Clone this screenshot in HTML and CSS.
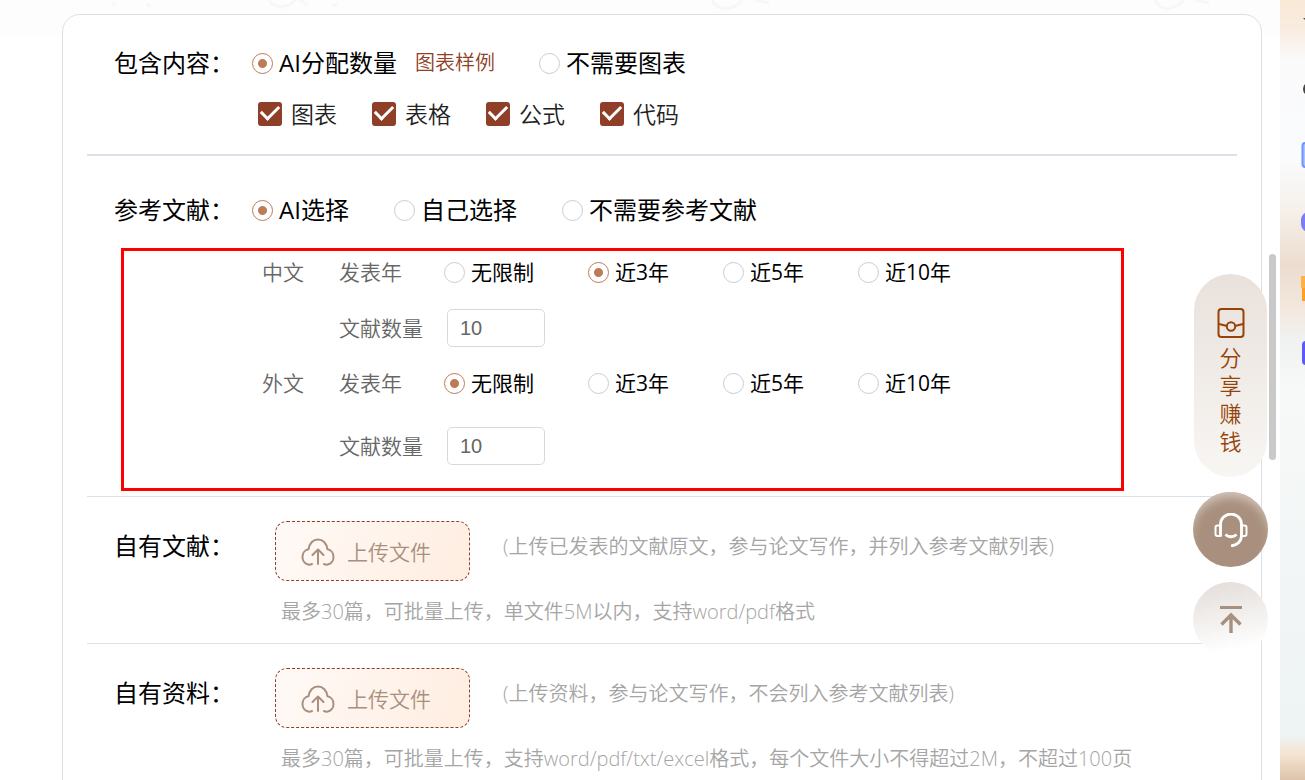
FILE: index.html
```html
<!DOCTYPE html>
<html lang="zh-CN">
<head>
<meta charset="utf-8">
<meta name="viewport" content="width=device-width, initial-scale=1">
<title>论文设置</title>
<link rel="stylesheet" href="styles.css">
</head>
<body>
<svg class="sprite" aria-hidden="true">
  <symbol id="cloud" viewBox="0 0 34 28">
    <g fill="none" stroke="currentColor" stroke-width="2" stroke-linecap="round" stroke-linejoin="round">
      <path d="M11 26c-1.200.6-2.500.8-3.700.5A7.500 7.500 0 0 1 1.500 19c0-4 2.600-7.200 6-7.700C8.200 5.600 12 1.500 17 1.500s8.800 4.100 9.500 9.800c3.400.5 6 3.700 6 7.700a7.500 7.500 0 0 1-5.800 7.500c-1.200.3-2.500.1-3.700-.5"/>
      <path d="M17 26V12M11.500 17L17 11.500L22.500 17"/>
    </g>
  </symbol>
</svg>
<main class="page">
  <svg class="watermark" viewBox="0 0 1280 14" aria-hidden="true">
    <path d="M112 4l4 1M147 3l3 4M269 0c4 9 20 9 27-1M300 0l8 5M332 5h6M712 0c6 12 24 10 30 0M755 0l14 3M1155 0c6 14 24 8 28 0M1195 0l14 3"/>
  </svg>
  <form class="card">
    <section class="section section-content">
      <div class="row">
        <span class="title">包含内容：</span>
        <label class="choice"><input class="radio" type="radio" name="content" checked>AI分配数量</label>
        <a class="sample" href="#">图表样例</a>
        <label class="choice"><input class="radio" type="radio" name="content">不需要图表</label>
      </div>
      <div class="checks">
        <label class="check"><input class="checkbox" type="checkbox" checked>图表</label>
        <label class="check"><input class="checkbox" type="checkbox" checked>表格</label>
        <label class="check"><input class="checkbox" type="checkbox" checked>公式</label>
        <label class="check"><input class="checkbox" type="checkbox" checked>代码</label>
      </div>
    </section>

    <section class="section section-refs">
      <div class="row refs-row">
        <span class="title">参考文献：</span>
        <label class="choice"><input class="radio" type="radio" name="refs" checked>AI选择</label>
        <label class="choice"><input class="radio" type="radio" name="refs">自己选择</label>
        <label class="choice"><input class="radio" type="radio" name="refs">不需要参考文献</label>
      </div>
      <div class="limits">
        <div class="limit-group">
          <span class="lang">中文</span>
          <span class="field">发表年</span>
          <div class="years">
            <label class="choice"><input class="radio" type="radio" name="cn">无限制</label>
            <label class="choice"><input class="radio" type="radio" name="cn" checked>近3年</label>
            <label class="choice"><input class="radio" type="radio" name="cn">近5年</label>
            <label class="choice"><input class="radio" type="radio" name="cn">近10年</label>
          </div>
          <label class="field count" for="cn-count">文献数量</label>
          <input class="number" id="cn-count" type="text" value="10">
        </div>
        <div class="limit-group limit-foreign">
          <span class="lang">外文</span>
          <span class="field">发表年</span>
          <div class="years">
            <label class="choice"><input class="radio" type="radio" name="en" checked>无限制</label>
            <label class="choice"><input class="radio" type="radio" name="en">近3年</label>
            <label class="choice"><input class="radio" type="radio" name="en">近5年</label>
            <label class="choice"><input class="radio" type="radio" name="en">近10年</label>
          </div>
          <label class="field count" for="en-count">文献数量</label>
          <input class="number" id="en-count" type="text" value="10">
        </div>
      </div>
    </section>

    <section class="section section-upload">
      <span class="title">自有文献：</span>
      <button class="upload" type="button"><svg class="cloud"><use href="#cloud"/></svg>上传文件</button>
      <span class="hint">(上传已发表的文献原文，参与论文写作，并列入参考文献列表)</span>
      <p class="note">最多30篇，可批量上传，单文件5M以内，支持word/pdf格式</p>
    </section>

    <section class="section section-upload">
      <span class="title">自有资料：</span>
      <button class="upload" type="button"><svg class="cloud"><use href="#cloud"/></svg>上传文件</button>
      <span class="hint">(上传资料，参与论文写作，不会列入参考文献列表)</span>
      <p class="note">最多30篇，可批量上传，支持word/pdf/txt/excel格式，每个文件大小不得超过2M，不超过100页</p>
    </section>
  </form>
  <div class="thumb"></div>
  <nav class="floating" aria-label="快捷操作">
    <button class="share" type="button">
      <svg class="share-icon" viewBox="0 0 28 30" fill="none" stroke="currentColor" stroke-width="2">
        <rect x="1.500" y="1" width="25" height="28" rx="3"/>
        <circle cx="14" cy="18.500" r="4.200"/>
        <path d="M2 16l8 2M26 16l-8 2"/>
      </svg>
      <span class="share-text">分享赚钱</span>
    </button>
    <button class="round service" type="button" aria-label="客服">
      <svg class="service-icon" viewBox="0 0 34 34" fill="none" stroke="currentColor" stroke-width="2.800">
        <path d="M6.500 23V11.500a10.500 10.500 0 0 1 21 0V22.500c0 6-4.500 10-10.500 10.300"/>
        <path d="M6.500 12.500H3.500a2 2 0 0 0-2 2v6.500a2 2 0 0 0 2 2h3zM27.500 12.500h3a2 2 0 0 1 2 2v6.500a2 2 0 0 1-2 2h-3z" stroke-width="2"/>
        <path d="M11.500 21.500c3 3 8 3 11 0"/>
      </svg>
    </button>
    <button class="round to-top" type="button" aria-label="返回顶部">
      <svg class="top-icon" viewBox="0 0 22 27" fill="none" stroke="currentColor">
        <path d="M0 1.500H22" stroke-width="3"/>
        <path d="M11 27V9M1.500 18.500L11 9l9.500 9.500" stroke-width="3.400"/>
      </svg>
    </button>
  </nav>
</main>
<aside class="strip">
  <svg class="strip-icons" viewBox="0 0 25 400" aria-hidden="true">
    <path d="M23 18h2v2z" fill="#555"/>
    <circle cx="30" cy="89" r="6" fill="none" stroke="#444" stroke-width="2"/>
    <rect x="22.500" y="143" width="20" height="24" rx="3" fill="#a9c6fb" stroke="#6b97f7" stroke-width="2"/>
    <rect x="21" y="212" width="20" height="20" rx="8" fill="#7f7cf5"/>
    <path d="M21 276h4v12h-4z" fill="#ffb23f"/><path d="M22 288h3v13h-3z" fill="#ff9e1f"/>
    <rect x="22" y="341" width="20" height="24" rx="4" fill="#5d59f3"/>
  </svg>
</aside>
</body>
</html>
```

FILE: styles.css
```css
* { box-sizing: border-box; }

body {
  margin: 0;
  height: 100vh;
  overflow: hidden;
  display: flex;
  background: #fff;
  color: #000;
  font-family: "Open Sans", "Noto Sans CJK SC", sans-serif;
  font-size: 24px;
  font-weight: 350;
  line-height: 32px;
}

button, input { font: inherit; }
.sprite { display: none; }

.page {
  position: relative;
  flex: 1;
  min-width: 0;
  padding: 0 18px 0 62px;
  background: linear-gradient(#fdfdfd 35px, #fff 35px);
}

.watermark {
  position: absolute;
  top: 0;
  left: 0;
  width: 100%;
  height: 14px;
  fill: none;
  stroke: #f7f7f7;
  stroke-width: 3;
}

.card {
  margin-top: 14px;
  padding: 0 24px 40px;
  border: 1px solid #dcdfe8;
  border-radius: 18px;
  background: #fff;
}

.section { border-bottom: 1px solid #dce0e9; }
.section:last-child { border-bottom: 0; }

.section-content {
  padding: 32px 0 24px 27px;
  border-bottom-width: 2px;
}

.row { display: flex; align-items: center; }
.title { width: 138px; flex: none; white-space: nowrap; font-weight: 400; }
.choice { display: flex; align-items: center; gap: 6px; white-space: nowrap; font-weight: 400; }

.radio, .checkbox { appearance: none; margin: 0; flex: none; }

.radio {
  width: 21px;
  height: 21px;
  border: 1px solid #ccc;
  border-radius: 50%;
  background: #fff;
}

.radio:checked {
  border-color: #bd7b57;
  background: radial-gradient(circle, #bd7b57 4px, #fff 5px);
}

.sample {
  margin: 0 44px 0 18px;
  color: #8f4027;
  font-size: 20px;
  text-decoration: none;
}

.checks {
  display: flex;
  gap: 35px;
  margin-top: 19px;
  padding-left: 144px;
  font-size: 23px;
  color: #222;
}

.check { display: flex; align-items: center; gap: 9px; }

.checkbox {
  display: grid;
  place-items: center;
  width: 24px;
  height: 24px;
  border-radius: 3px;
  background: #8f3e27;
}

.checkbox:checked::before {
  content: "";
  width: 15px;
  height: 8px;
  margin-bottom: 7px;
  border: solid #fff;
  border-width: 0 0 3px 3px;
  transform: rotate(-45deg);
}

.section-refs { padding: 38px 0 5px; }
.refs-row { gap: 45px; padding-left: 27px; }
.refs-row .title { margin-right: -45px; }

.limits {
  margin: 22px 113px 0 34px;
  padding: 5px 0 23px 138px;
  border: 3px solid #f00;
  font-size: 21px;
  color: #666;
}

.limit-group {
  display: grid;
  grid-template-columns: 77px 105px 1fr;
  align-items: center;
  row-gap: 21px;
}

.limit-foreign { margin-top: 20px; row-gap: 28px; }
.count { grid-column: 2; }

.years { display: flex; gap: 54px; color: #000; }

.number {
  width: 98px;
  height: 38px;
  margin-left: 3px;
  padding: 0 12px;
  border: 1px solid #d9d9d9;
  border-radius: 5px;
  color: #666;
  font-family: "Liberation Sans", sans-serif;
  font-size: 20px;
  font-weight: 400;
}

.section-upload {
  display: grid;
  grid-template-columns: 161px 195px 1fr;
  column-gap: 0;
  row-gap: 15px;
  padding: 24px 0 15px 27px;
}

.section-upload .title { margin-top: 9px; }

.upload {
  display: flex;
  align-items: center;
  gap: 12px;
  height: 60px;
  padding: 2px 25px 0;
  border: 1px dashed #8f3e27;
  border-radius: 12px;
  background: linear-gradient(115deg, #fffaf7, #ffede0);
  color: #a98f7e;
  font-size: 21px;
  white-space: nowrap;
}

.cloud { width: 34px; height: 28px; flex: none; }
.hint { margin: 10px 0 0 33px; font-size: 20px; color: #a5a5a5; white-space: nowrap; }
.note { grid-column: 2 / -1; margin: 0 0 0 6px; font-size: 20px; color: #a5a5a5; white-space: nowrap; }

.thumb {
  position: absolute;
  top: 254px;
  right: 4px;
  width: 7px;
  height: 206px;
  border-radius: 4px;
  background: #c9c9ca;
}

.floating {
  position: absolute;
  top: 274px;
  right: 12px;
  display: flex;
  flex-direction: column;
  align-items: center;
  gap: 15px;
}

.floating button { border: 0; cursor: pointer; }

.share {
  display: flex;
  flex-direction: column;
  align-items: center;
  gap: 5px;
  width: 73px;
  padding: 34px 0 22px;
  border-radius: 37px;
  background: linear-gradient(#e9e1dc, #f8f6f3);
  color: #964307;
}

.share-icon { width: 28px; height: 30px; }
.share-text { width: 22px; font-size: 22px; line-height: 28px; }

.round {
  display: grid;
  place-items: center;
  width: 75px;
  height: 75px;
  padding: 0;
  border-radius: 50%;
}

.service {
  background: #a9907e;
  box-shadow: inset 0 8px 10px -3px #d2c4ba;
  color: #fff;
}

.service-icon { width: 34px; height: 34px; }
.to-top { background: linear-gradient(170deg, #e2dcd8, #fff 85%); color: #a9907e; }
.top-icon { width: 22px; height: 27px; }

.strip {
  flex: 0 0 25px;
  overflow: hidden;
  background: linear-gradient(#f9e9d6 0, #f9ece0 30px, #fafafb 60px, #fafbfd 160px, #f5efe8 215px, #ecdccf 265px, #f3e8de 310px, #f0f2f1 340px, #f7f9f8 390px, #f1f5f5 600px, #eef3f4 735px, #f5e3d1 755px, #ddc3aa 780px);
}

.strip-icons { width: 25px; height: 400px; display: block; }
```
